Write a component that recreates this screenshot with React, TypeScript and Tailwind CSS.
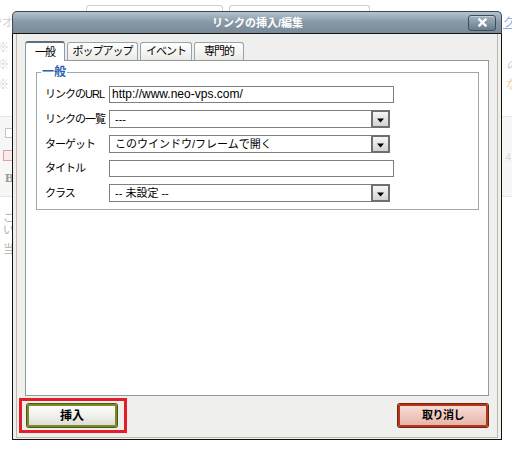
import React from 'react'

const FONT = "font-['Liberation_Sans','Noto_Sans_CJK_JP',sans-serif]"

function Backdrop() {
  return (
    <div className="flex flex-col text-[12px] leading-[14px]">
      <div className="flex mt-[5px] h-[8px]">
        <div className="ml-[86px] w-[137px] border border-b-0 border-[#cfcfcf] rounded-t-[3px]" />
        <div className="ml-[6px] w-[141px] border border-b-0 border-[#cfcfcf] rounded-t-[3px]" />
      </div>
      <div className="flex justify-between mt-[3px] h-[14px]">
        <span className="-ml-[3px] text-[#f0a2bc]">*<span className="text-[#d4d4d4]">オ</span></span>
        <span className="-mr-[3px] text-[#8aa6ee] underline">ク</span>
      </div>
      <div className="flex justify-between mt-[11px] h-[14px]">
        <span className="-ml-[3px] text-[#d0d0d0]">※</span>
      </div>
      <div className="flex justify-between mt-[3px] h-[14px]">
        <span className="-ml-[3px] text-[#d0d0d0]">※</span>
        <span className="-mr-[6px] text-[#c8c8c8] italic">の</span>
      </div>
      <div className="flex justify-between mt-[6px] h-[14px]">
        <span className="-ml-[3px] text-[#d0d0d0]">※</span>
        <span className="-mr-[6px] text-[#e8cfa8]">な</span>
      </div>
      <div className="mt-[24px] h-[81px] bg-[#f7f7f7] border-y border-[#e6e6e6] flex justify-between">
        <div className="flex flex-col pl-[5px] pt-[11px]">
          <div className="w-[10px] h-[10px] bg-white border border-[#c4c4c4]" />
          <div className="mt-[12px] -ml-[2px] w-[12px] h-[11px] bg-[#fbeaea] border border-[#e0a0a0]" />
          <span className="mt-[10px] font-['Liberation_Serif',serif] font-bold text-[13px] text-[#999]">B</span>
        </div>
        <span className="mt-[34px] mr-[1px] text-[10px] text-[#d8d8d8]">4</span>
      </div>
      <div className="flex flex-col pl-[3px] mt-[15px] text-[11px] text-[#b0b0b0] leading-[12px]">
        <span>こ</span>
        <span>い</span>
        <span className="mt-[7px]">当</span>
      </div>
    </div>
  )
}

function Arrow() {
  return (
    <svg width="9" height="6" viewBox="0 0 9 6">
      <path d="M1 1.5h7L4.5 5.5z" fill="#000" />
    </svg>
  )
}

function TextInput({ value }: { value?: string }) {
  return (
    <div className="h-[17px] w-[285px] border border-[#7f7f7f] bg-white pl-[2px] text-[12px] leading-[15px] text-black">
      {value}
    </div>
  )
}

function Select({ value }: { value: string }) {
  return (
    <div className="h-[18px] w-[281px] flex border border-[#808080] bg-white">
      <div className="flex-1 pl-[5px] text-[11px] leading-[16px] text-black whitespace-pre">{value}</div>
      <div className="w-[19px] h-[18px] -my-px -mr-px border-2 border-[#6f6f6f] bg-gradient-to-b from-[#f6f6f6] to-[#d3d3d3] flex items-center justify-center pt-[2px]">
        <Arrow />
      </div>
    </div>
  )
}

const rows: { label: string; kind: 'input' | 'select'; value?: string }[] = [
  { label: 'リンクのURL', kind: 'input', value: 'http://www.neo-vps.com/' },
  { label: 'リンクの一覧', kind: 'select', value: '---' },
  { label: 'ターゲット', kind: 'select', value: 'このウインドウ/フレームで開く' },
  { label: 'タイトル', kind: 'input' },
  { label: 'クラス', kind: 'select', value: '-- 未設定 --' },
]

const tabs = ['一般', 'ポップアップ', 'イベント', '専門的']
const tabWidths = ['w-[40px]', 'w-[71px]', 'w-[52px]', 'w-[50px]']

export default function App() {
  return (
    <div className={`relative w-[512px] h-[455px] overflow-hidden bg-white ${FONT}`}>
      <Backdrop />

      {/* dialog */}
      <div className="absolute left-[12px] top-[11px] w-[490px] flex flex-col">
        {/* title bar */}
        <div className="h-[23px] flex items-center rounded-t-[5px] border border-[#3b4650] border-b-[#151515] bg-gradient-to-b from-[#b5c3ce] via-[#8697a5] to-[#798a98]">
          <div className="w-[34px]" />
          <div className="flex-1 text-center text-white font-bold text-[11px] leading-[14px]">リンクの挿入/編集</div>
          <div className="w-[28px] h-[16px] mr-[5px] rounded-[3px] border border-[#3e4d5a] bg-gradient-to-b from-[#a3b3bf] to-[#6a7b89] flex items-center justify-center shadow-[inset_0_1px_0_rgba(255,255,255,0.35)]">
            <svg width="9" height="9" viewBox="0 0 9 9">
              <path d="M1.5 1.5l6 6M7.5 1.5l-6 6" stroke="#fff" strokeWidth="2.4" strokeLinecap="square" />
            </svg>
          </div>
        </div>

        {/* body */}
        <div className="border-l border-r border-b border-[#111] bg-[#efefed] px-[3px] pb-[1px]">
          <div className="border-l border-r border-b border-[#c6b6a9] px-[8px] pt-[7px] pb-[10px]">
            {/* tabs */}
            <div className="flex items-end gap-[2px] h-[19px]">
              {tabs.map((t, i) =>
                i === 0 ? (
                  <div key={t} className={`${tabWidths[i]} h-[20px] -mb-px relative z-10 bg-white border border-b-0 border-[#8c9ba6] border-t-[#5f6e7b] border-t-2 rounded-t-[3px] flex items-center justify-center text-[11px] tracking-[-1px] text-black`}>
                    {t}
                  </div>
                ) : (
                  <div key={t} className={`${tabWidths[i]} h-[18px] bg-gradient-to-b from-white to-[#ebeae5] border border-b-0 border-[#94a3ae] rounded-t-[3px] flex items-center justify-center text-[11px] tracking-[-1px] text-black`}>
                    {t}
                  </div>
                )
              )}
            </div>

            {/* panel */}
            <div className="h-[336px] border border-[#919b9c] bg-white pl-[10px]">
              <fieldset className="mt-[4px] w-[443px] border border-[#a2a8a8] pl-[4px] pb-[7px]">
                <legend className="px-[1px] text-[#2c5fae] font-bold text-[12px] leading-[14px]">一般</legend>
                <div className="mt-[7px] ml-[4px] flex flex-col gap-[7px]">
                  {rows.map(r => (
                    <div key={r.label} className="flex items-center">
                      <div className="w-[64px] text-[11px] tracking-[-1px] text-black whitespace-nowrap">{r.label}</div>
                      {r.kind === 'input' ? <TextInput value={r.value} /> : <Select value={r.value || ''} />}
                    </div>
                  ))}
                </div>
              </fieldset>
            </div>

            {/* buttons */}
            <div className="flex justify-between items-center mt-[8px] pl-[2px] pr-[1px]">
              <div className="relative">
                <div className="w-[90px] h-[23px] rounded-[2px] border-2 border-[#7b8a25] bg-gradient-to-b from-[#fcfcfa] via-[#f0f0ec] to-[#deded8] flex items-center justify-center text-[12px] font-bold text-black shadow-[0_0_0_1px_#4d5518]">
                  挿入
                </div>
                <div className="absolute left-[-8px] right-[-10px] top-[-6px] bottom-[-6px] border-[3px] border-[#e41e26]" />
              </div>
              <div className="w-[90px] h-[23px] rounded-[2px] border-2 border-[#b3361a] bg-gradient-to-b from-[#f8dcd6] via-[#f0c9c1] to-[#e6b4aa] flex items-center justify-center text-[11px] tracking-[-0.5px] font-bold text-black shadow-[0_0_0_1px_#6e2412]">
                取り消し
              </div>
            </div>
          </div>
        </div>
      </div>
    </div>
  )
}
